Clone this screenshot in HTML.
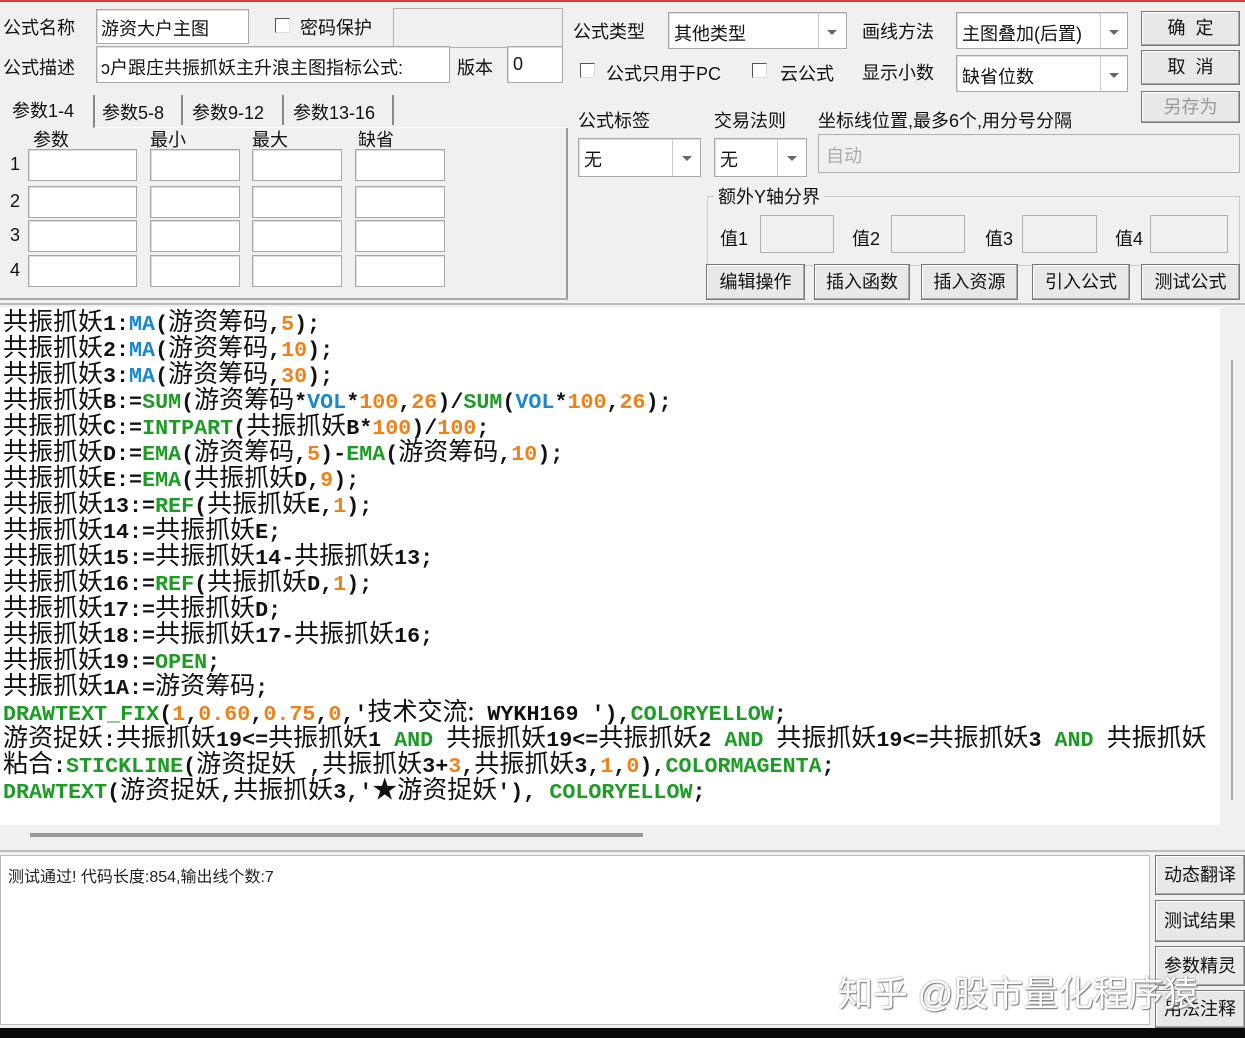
<!DOCTYPE html>
<html><head><meta charset="utf-8">
<style>
*{box-sizing:border-box;margin:0;padding:0}
body{width:1245px;height:1038px;background:#f0f0f0;position:relative;overflow:hidden;font-family:"Liberation Sans","Noto Sans CJK SC",sans-serif;font-size:18px;color:#111}
.a{position:absolute;white-space:nowrap}
.in{position:absolute;background:#fff;border:1px solid #a8a8a8;box-shadow:inset 1px 1px 0 #ddd}
.gi{position:absolute;background:#f0f0f0;border:1px solid #b0b0b0}
.cb{position:absolute;width:15px;height:15px;background:#fff;border:1px solid #555;border-right-color:#ddd;border-bottom-color:#ddd}
.btn{position:absolute;background:#e8e8e8;border:1px solid #777;box-shadow:inset -1px -1px 0 #aaa,inset 1px 1px 0 #fff;text-align:center;font-size:18px}
.dd{position:absolute;width:1px;background:#ccc}
.arr{position:absolute;width:0;height:0;border-left:5px solid transparent;border-right:5px solid transparent;border-top:5px solid #666}
#code{position:absolute;left:0;top:307px;width:1220px;height:518px;background:#fff;overflow:hidden;font-family:"Liberation Mono",monospace;font-weight:bold;font-size:21.7px;padding-top:0}
#code div{height:26px;line-height:26px;white-space:pre;padding-left:3px}
#code i{font-style:normal;font-weight:normal;font-family:"Noto Sans CJK SC",sans-serif;font-size:25px}
.k{color:#1a88cc}.g{color:#1c9c24}.o{color:#f08018}
</style></head><body>
<div class="a" style="left:0;top:0;width:1245px;height:2px;background:#d04040"></div>
<div class="a" style="left:3px;top:14px">公式名称</div>
<div class="in" style="left:96px;top:9px;width:153px;height:35px"></div>
<div class="a" style="left:101px;top:15px">游资大户主图</div>
<div class="cb" style="left:275px;top:18px"></div>
<div class="a" style="left:300px;top:14px">密码保护</div>
<div class="gi" style="left:393px;top:8px;width:170px;height:40px"></div>
<div class="a" style="left:3px;top:54px">公式描述</div>
<div class="in" style="left:96px;top:46px;width:354px;height:37px"></div>
<div class="a" style="left:101px;top:54px;width:345px;overflow:hidden">ɔ户跟庄共振抓妖主升浪主图指标公式:</div>
<div class="a" style="left:457px;top:54px">版本</div>
<div class="in" style="left:507px;top:46px;width:56px;height:37px"></div>
<div class="a" style="left:513px;top:54px">0</div>
<div class="a" style="left:12px;top:97px">参数1-4</div>
<div class="a" style="left:102px;top:99px">参数5-8</div>
<div class="a" style="left:192px;top:99px">参数9-12</div>
<div class="a" style="left:293px;top:99px">参数13-16</div>
<div class="a" style="left:93px;top:95px;width:2px;height:33px;background:#888"></div>
<div class="a" style="left:181px;top:95px;width:2px;height:30px;background:#888"></div>
<div class="a" style="left:282px;top:95px;width:2px;height:30px;background:#888"></div>
<div class="a" style="left:392px;top:95px;width:2px;height:30px;background:#888"></div>
<div class="a" style="left:94px;top:127px;width:472px;height:1px;background:#fff"></div>
<div class="a" style="left:566px;top:128px;width:2px;height:172px;background:#999"></div>
<div class="a" style="left:0;top:298px;width:568px;height:2px;background:#aaa"></div>
<div class="a" style="left:33px;top:126px">参数</div>
<div class="a" style="left:150px;top:126px">最小</div>
<div class="a" style="left:252px;top:126px">最大</div>
<div class="a" style="left:358px;top:126px">缺省</div>
<div class="a" style="left:10px;top:154px">1</div><div class="a" style="left:10px;top:191px">2</div><div class="a" style="left:10px;top:225px">3</div><div class="a" style="left:10px;top:260px">4</div>
<div class="in" style="left:28px;top:149px;width:109px;height:32px"></div><div class="in" style="left:150px;top:149px;width:90px;height:32px"></div><div class="in" style="left:252px;top:149px;width:90px;height:32px"></div><div class="in" style="left:355px;top:149px;width:90px;height:32px"></div>
<div class="in" style="left:28px;top:186px;width:109px;height:32px"></div><div class="in" style="left:150px;top:186px;width:90px;height:32px"></div><div class="in" style="left:252px;top:186px;width:90px;height:32px"></div><div class="in" style="left:355px;top:186px;width:90px;height:32px"></div>
<div class="in" style="left:28px;top:220px;width:109px;height:32px"></div><div class="in" style="left:150px;top:220px;width:90px;height:32px"></div><div class="in" style="left:252px;top:220px;width:90px;height:32px"></div><div class="in" style="left:355px;top:220px;width:90px;height:32px"></div>
<div class="in" style="left:28px;top:255px;width:109px;height:32px"></div><div class="in" style="left:150px;top:255px;width:90px;height:32px"></div><div class="in" style="left:252px;top:255px;width:90px;height:32px"></div><div class="in" style="left:355px;top:255px;width:90px;height:32px"></div>
<div class="a" style="left:573px;top:18px">公式类型</div>
<div class="in" style="left:668px;top:12px;width:179px;height:37px"></div>
<div class="a" style="left:674px;top:20px">其他类型</div>
<div class="dd" style="left:818px;top:13px;height:35px"></div><div class="arr" style="left:827px;top:30px"></div>
<div class="a" style="left:862px;top:18px">画线方法</div>
<div class="in" style="left:956px;top:12px;width:172px;height:37px"></div>
<div class="a" style="left:962px;top:20px">主图叠加(后置)</div>
<div class="dd" style="left:1100px;top:13px;height:35px"></div><div class="arr" style="left:1109px;top:30px"></div>
<div class="btn" style="left:1141px;top:11px;width:99px;height:35px;line-height:33px">确&nbsp;&nbsp;定</div>
<div class="cb" style="left:580px;top:63px"></div>
<div class="a" style="left:606px;top:60px">公式只用于PC</div>
<div class="cb" style="left:752px;top:63px"></div>
<div class="a" style="left:780px;top:60px">云公式</div>
<div class="a" style="left:862px;top:59px">显示小数</div>
<div class="in" style="left:956px;top:55px;width:172px;height:37px"></div>
<div class="a" style="left:962px;top:63px">缺省位数</div>
<div class="dd" style="left:1100px;top:56px;height:35px"></div><div class="arr" style="left:1109px;top:73px"></div>
<div class="btn" style="left:1141px;top:50px;width:99px;height:35px;line-height:33px">取&nbsp;&nbsp;消</div>
<div class="btn" style="left:1141px;top:91px;width:99px;height:32px;line-height:30px;color:#999">另存为</div>
<div class="a" style="left:578px;top:107px">公式标签</div>
<div class="a" style="left:714px;top:107px">交易法则</div>
<div class="a" style="left:818px;top:107px">坐标线位置,最多6个,用分号分隔</div>
<div class="in" style="left:578px;top:138px;width:123px;height:39px"></div>
<div class="a" style="left:584px;top:146px">无</div>
<div class="dd" style="left:672px;top:139px;height:37px"></div><div class="arr" style="left:682px;top:156px"></div>
<div class="in" style="left:714px;top:138px;width:93px;height:39px"></div>
<div class="a" style="left:720px;top:146px">无</div>
<div class="dd" style="left:777px;top:139px;height:37px"></div><div class="arr" style="left:787px;top:156px"></div>
<div class="gi" style="left:818px;top:134px;width:422px;height:39px"></div>
<div class="a" style="left:826px;top:142px;color:#aaa">自动</div>
<div class="a" style="left:707px;top:196px;width:533px;height:70px;border:1px solid #ccc"></div>
<div class="a" style="left:714px;top:183px;background:#f0f0f0;padding:0 4px">额外Y轴分界</div>
<div class="a" style="left:720px;top:225px">值1</div><div class="gi" style="left:760px;top:215px;width:74px;height:38px"></div>
<div class="a" style="left:852px;top:225px">值2</div><div class="gi" style="left:891px;top:215px;width:74px;height:38px"></div>
<div class="a" style="left:985px;top:225px">值3</div><div class="gi" style="left:1022px;top:215px;width:75px;height:38px"></div>
<div class="a" style="left:1115px;top:225px">值4</div><div class="gi" style="left:1150px;top:215px;width:78px;height:38px"></div>
<div class="btn" style="left:706px;top:264px;width:99px;height:36px;line-height:34px">编辑操作</div>
<div class="btn" style="left:814px;top:264px;width:96px;height:36px;line-height:34px">插入函数</div>
<div class="btn" style="left:921px;top:264px;width:97px;height:36px;line-height:34px">插入资源</div>
<div class="btn" style="left:1032px;top:264px;width:98px;height:36px;line-height:34px">引入公式</div>
<div class="btn" style="left:1141px;top:264px;width:99px;height:36px;line-height:34px">测试公式</div>
<div class="a" style="left:0;top:303px;width:1245px;height:2px;background:#bbb"></div>
<div id="code">
<div><i>共振抓妖</i>1:<span class="k">MA</span>(<i>游资筹码</i>,<span class="o">5</span>);</div>
<div><i>共振抓妖</i>2:<span class="k">MA</span>(<i>游资筹码</i>,<span class="o">10</span>);</div>
<div><i>共振抓妖</i>3:<span class="k">MA</span>(<i>游资筹码</i>,<span class="o">30</span>);</div>
<div><i>共振抓妖</i>B:=<span class="g">SUM</span>(<i>游资筹码</i>*<span class="k">VOL</span>*<span class="o">100</span>,<span class="o">26</span>)/<span class="g">SUM</span>(<span class="k">VOL</span>*<span class="o">100</span>,<span class="o">26</span>);</div>
<div><i>共振抓妖</i>C:=<span class="g">INTPART</span>(<i>共振抓妖</i>B*<span class="o">100</span>)/<span class="o">100</span>;</div>
<div><i>共振抓妖</i>D:=<span class="g">EMA</span>(<i>游资筹码</i>,<span class="o">5</span>)-<span class="g">EMA</span>(<i>游资筹码</i>,<span class="o">10</span>);</div>
<div><i>共振抓妖</i>E:=<span class="g">EMA</span>(<i>共振抓妖</i>D,<span class="o">9</span>);</div>
<div><i>共振抓妖</i>13:=<span class="g">REF</span>(<i>共振抓妖</i>E,<span class="o">1</span>);</div>
<div><i>共振抓妖</i>14:=<i>共振抓妖</i>E;</div>
<div><i>共振抓妖</i>15:=<i>共振抓妖</i>14-<i>共振抓妖</i>13;</div>
<div><i>共振抓妖</i>16:=<span class="g">REF</span>(<i>共振抓妖</i>D,<span class="o">1</span>);</div>
<div><i>共振抓妖</i>17:=<i>共振抓妖</i>D;</div>
<div><i>共振抓妖</i>18:=<i>共振抓妖</i>17-<i>共振抓妖</i>16;</div>
<div><i>共振抓妖</i>19:=<span class="g">OPEN</span>;</div>
<div><i>共振抓妖</i>1A:=<i>游资筹码</i>;</div>
<div><span class="g">DRAWTEXT_FIX</span>(<span class="o">1</span>,<span class="o">0.60</span>,<span class="o">0.75</span>,<span class="o">0</span>,'<i>技术交流:</i> WYKH169 '),<span class="g">COLORYELLOW</span>;</div>
<div><i>游资捉妖</i>:<i>共振抓妖</i>19&lt;=<i>共振抓妖</i>1 <span class="g">AND</span> <i>共振抓妖</i>19&lt;=<i>共振抓妖</i>2 <span class="g">AND</span> <i>共振抓妖</i>19&lt;=<i>共振抓妖</i>3 <span class="g">AND</span> <i>共振抓妖</i></div>
<div><i>粘合</i>:<span class="g">STICKLINE</span>(<i>游资捉妖</i> ,<i>共振抓妖</i>3+<span class="o">3</span>,<i>共振抓妖</i>3,<span class="o">1</span>,<span class="o">0</span>),<span class="g">COLORMAGENTA</span>;</div>
<div><span class="g">DRAWTEXT</span>(<i>游资捉妖</i>,<i>共振抓妖</i>3,'<i>★游资捉妖</i>'), <span class="g">COLORYELLOW</span>;</div>
</div>
<div class="a" style="left:1231px;top:360px;width:2px;height:440px;background:#aaa"></div>
<div class="a" style="left:30px;top:833px;width:613px;height:4px;background:#999"></div>
<div class="a" style="left:0;top:850px;width:1245px;height:2px;background:#bbb"></div>
<div class="a" style="left:0;top:855px;width:1150px;height:170px;background:#fff;border:1px solid #bbb"></div>
<div class="a" style="left:8px;top:863px;font-size:16px;color:#222">测试通过! 代码长度:854,输出线个数:7</div>
<div class="btn" style="left:1155px;top:855px;width:90px;height:40px;line-height:38px">动态翻译</div>
<div class="btn" style="left:1155px;top:900px;width:90px;height:42px;line-height:40px">测试结果</div>
<div class="btn" style="left:1155px;top:946px;width:90px;height:40px;line-height:38px">参数精灵</div>
<div class="btn" style="left:1155px;top:990px;width:90px;height:38px;line-height:36px">用法注释</div>
<div class="a" style="left:838px;top:966px;font-size:35px;color:#fff;text-shadow:0 0 2px #888,1px 1px 1px #777">知乎 @股市量化程序猿</div>
<div class="a" style="left:0;top:1028px;width:1245px;height:10px;background:#0a0a0a"></div>
</body></html>
